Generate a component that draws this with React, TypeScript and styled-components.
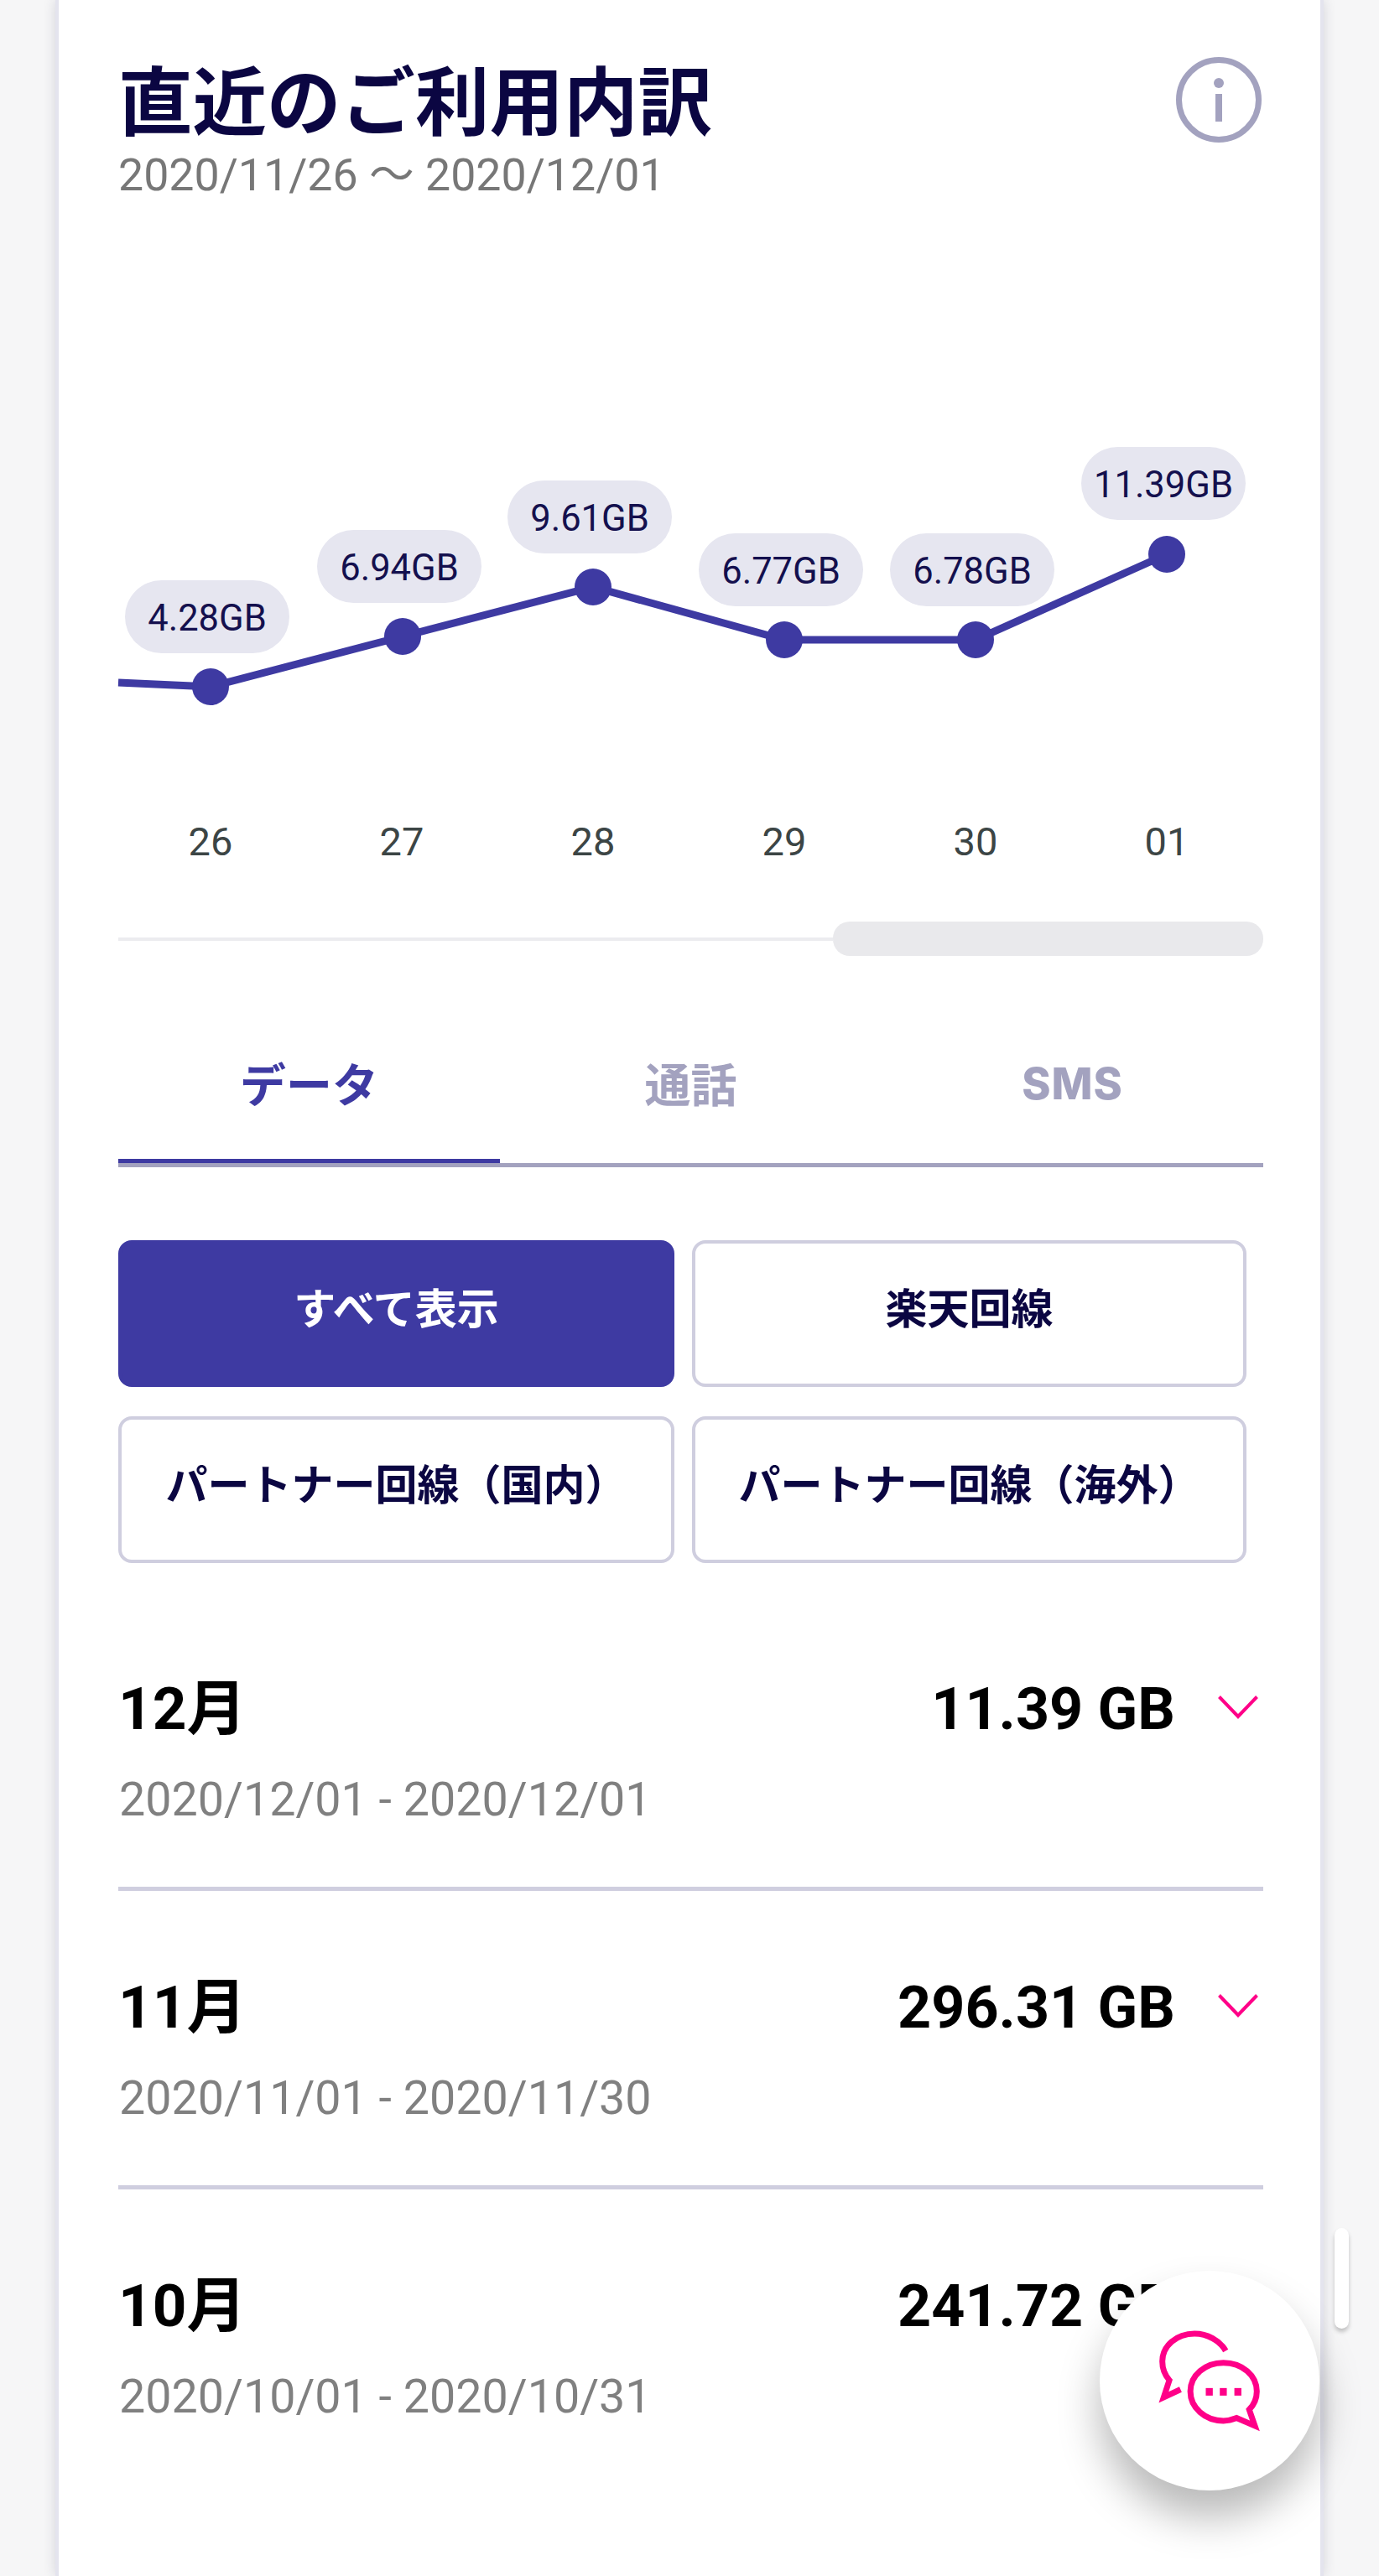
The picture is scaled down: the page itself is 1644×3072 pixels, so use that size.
import styled, { createGlobalStyle } from 'styled-components';

const GlobalStyle = createGlobalStyle`
  html, body {
    margin: 0;
    padding: 0;
    height: 3072px;
    overflow: hidden;
    background: #f6f6f7;
  }
  * {
    box-sizing: border-box;
  }
`;

const CJK = '"Noto Sans CJK JP", sans-serif';
const LATIN = 'Roboto, "Noto Sans CJK JP", sans-serif';

const Page = styled.div`
  position: relative;
  width: 1644px;
  height: 3072px;
  overflow: hidden;
  padding-left: 66px;
`;

const Panel = styled.main`
  width: 1512px;
  height: 3072px;
  background: #fff;
  border-left: 4px solid #e4e4ee;
  border-right: 4px solid #e4e4ee;
  box-shadow: 0 0 14px rgba(40, 40, 70, 0.16);
  padding: 60px 68px 0 71px;
`;

const Header = styled.header`
  display: flex;
  justify-content: space-between;
  align-items: flex-start;
  height: 180px;
`;

const Title = styled.h1`
  margin: 0;
  font-family: ${CJK};
  font-size: 88.5px;
  line-height: 110px;
  font-weight: 700;
  color: #0b0642;
`;

const Period = styled.p`
  margin: 8px 0 0;
  font-family: ${LATIN};
  font-size: 53.7px;
  line-height: 62px;
  font-weight: 400;
  color: #777;
`;

const InfoIcon = styled.svg`
  width: 102px;
  height: 102px;
  margin: 8px 2px 0 0;
  flex: none;
`;

const Chart = styled.div`
  position: relative;
  height: 460px;
  margin: 260px 0 0 0;
`;

const ChartLine = styled.svg`
  position: absolute;
  left: 0;
  top: 0;
  width: 1365px;
  height: 460px;
  overflow: visible;
`;

const Pill = styled.span`
  position: absolute;
  width: 196px;
  height: 87px;
  border-radius: 44px;
  background: #e6e6f0;
  color: #14104e;
  font-family: ${LATIN};
  font-size: 43.5px;
  line-height: 92px;
  text-align: center;
`;

const AxisRow = styled.div`
  display: grid;
  grid-template-columns: repeat(6, 228px);
  margin: 14px 0 0 -4px;
`;

const AxisLabel = styled.span`
  font-family: ${LATIN};
  font-size: 47px;
  line-height: 60px;
  text-align: center;
  color: #3c4545;
`;

const Scroller = styled.div`
  display: flex;
  align-items: center;
  height: 41px;
  margin-top: 65px;
`;

const ScrollTrack = styled.div`
  flex: 1;
  height: 4px;
  background: #ececef;
`;

const ScrollThumb = styled.div`
  width: 513px;
  height: 41px;
  border-radius: 20px;
  background: #e9e9ec;
`;

const Tabs = styled.nav`
  display: grid;
  grid-template-columns: repeat(3, 1fr);
  margin-top: 90px;
  border-bottom: 5px solid #a3a2bf;
`;

const Tab = styled.div<{ $active?: boolean }>`
  height: 157px;
  text-align: center;
  font-family: ${CJK};
  font-size: 55px;
  line-height: 120px;
  font-weight: 700;
  color: ${(p) => (p.$active ? '#3e3aa2' : '#a3a2bf')};
  border-bottom: 5px solid ${(p) => (p.$active ? '#3e3aa2' : 'transparent')};
`;

const TabLatin = styled.span`
  font-family: Inter, sans-serif;
  font-size: 52px;
  font-weight: 800;
  letter-spacing: 1px;
  vertical-align: 3px;
`;

const Filters = styled.div`
  display: grid;
  grid-template-columns: 663px 661px;
  grid-auto-rows: 175px;
  column-gap: 21px;
  row-gap: 35px;
  margin-top: 87px;
`;

const Filter = styled.button<{ $active?: boolean }>`
  padding: 0 0 20px;
  border-radius: 16px;
  border: 4px solid ${(p) => (p.$active ? '#3e3aa2' : '#cfcedf')};
  background: ${(p) => (p.$active ? '#3e3aa2' : '#fff')};
  color: ${(p) => (p.$active ? '#fff' : '#0b0642')};
  font-family: ${CJK};
  font-size: 50px;
  font-weight: 700;
`;

const UsageList = styled.section`
  margin-top: 35px;
`;

const UsageRow = styled.article`
  height: 356px;
  padding-top: 94px;
  border-bottom: 5px solid #cfcedf;

  &:last-child {
    border-bottom: none;
  }
`;

const UsageMain = styled.div`
  display: flex;
  justify-content: space-between;
  align-items: center;
  height: 90px;
`;

const Month = styled.span`
  font-family: ${LATIN};
  font-size: 71px;
  line-height: 90px;
  font-weight: 700;
  color: #000;
`;

const AmountGroup = styled.div`
  display: flex;
  align-items: center;
  gap: 51px;
  padding-right: 6px;
`;

const Amount = styled.span`
  font-family: ${LATIN};
  font-size: 70px;
  line-height: 90px;
  font-weight: 700;
  color: #000;
`;

const Chevron = styled.svg`
  width: 48px;
  height: 28px;
  margin-top: -4px;
`;

const DateRange = styled.p`
  margin: 28px 0 0 1px;
  font-family: ${LATIN};
  font-size: 55.6px;
  line-height: 70px;
  color: #808080;
`;

const ChatButton = styled.button`
  position: absolute;
  left: 1311px;
  top: 2708px;
  width: 262px;
  height: 262px;
  padding: 0;
  border: none;
  border-radius: 50%;
  background: #fff;
  box-shadow: 0 32px 50px rgba(0, 0, 0, 0.28);
  display: flex;
  align-items: center;
  justify-content: center;
`;

const ChatIcon = styled.svg`
  width: 127px;
  height: 127px;
`;

const PageScrollbar = styled.div`
  position: absolute;
  left: 1591px;
  top: 2657px;
  width: 17px;
  height: 120px;
  border-radius: 9px;
  background: #fff;
  box-shadow: 0 4px 5px rgba(0, 0, 0, 0.22);
`;

// x, y are relative to the chart box, which sits at (141, 500)
const points = [
  { day: '26', value: '4.28GB', x: 110, y: 319, pill: 192 },
  { day: '27', value: '6.94GB', x: 339, y: 259, pill: 132 },
  { day: '28', value: '9.61GB', x: 566, y: 200, pill: 73 },
  { day: '29', value: '6.77GB', x: 794, y: 263, pill: 136 },
  { day: '30', value: '6.78GB', x: 1022, y: 263, pill: 136 },
  { day: '01', value: '11.39GB', x: 1250, y: 161, pill: 33 },
];

const linePath = `M0 314 ${points.map((p) => `L${p.x} ${p.y}`).join(' ')}`;

const filters = ['すべて表示', '楽天回線', 'パートナー回線（国内）', 'パートナー回線（海外）'];

const usage = [
  { month: '12月', amount: '11.39 GB', range: '2020/12/01 - 2020/12/01' },
  { month: '11月', amount: '296.31 GB', range: '2020/11/01 - 2020/11/30' },
  { month: '10月', amount: '241.72 GB', range: '2020/10/01 - 2020/10/31' },
];

export default function App() {
  return (
    <Page>
      <GlobalStyle />
      <Panel>
        <Header>
          <div>
            <Title>直近のご利用内訳</Title>
            <Period>2020/11/26 ～ 2020/12/01</Period>
          </div>
          <InfoIcon viewBox="0 0 102 102">
            <circle cx="51" cy="51" r="47.5" fill="none" stroke="#a3a2bf" strokeWidth="7" />
            <circle cx="51" cy="31" r="6" fill="#a3a2bf" />
            <rect x="47" y="44" width="8" height="33" fill="#a3a2bf" />
          </InfoIcon>
        </Header>

        <Chart>
          <ChartLine viewBox="0 0 1365 460">
            <path d={linePath} fill="none" stroke="#3e3aa2" strokeWidth="9" />
            {points.map((p) => (
              <circle key={p.day} cx={p.x} cy={p.y} r="22" fill="#3e3aa2" />
            ))}
          </ChartLine>
          {points.map((p) => (
            <Pill key={p.day} style={{ left: p.x - 102, top: p.pill }}>
              {p.value}
            </Pill>
          ))}
        </Chart>
        <AxisRow>
          {points.map((p) => (
            <AxisLabel key={p.day}>{p.day}</AxisLabel>
          ))}
        </AxisRow>

        <Scroller>
          <ScrollTrack />
          <ScrollThumb />
        </Scroller>

        <Tabs>
          <Tab $active>データ</Tab>
          <Tab>通話</Tab>
          <Tab>
            <TabLatin>SMS</TabLatin>
          </Tab>
        </Tabs>

        <Filters>
          {filters.map((label, i) => (
            <Filter key={label} $active={i === 0}>
              {label}
            </Filter>
          ))}
        </Filters>

        <UsageList>
          {usage.map((row) => (
            <UsageRow key={row.month}>
              <UsageMain>
                <Month>{row.month}</Month>
                <AmountGroup>
                  <Amount>{row.amount}</Amount>
                  <Chevron viewBox="0 0 48 28">
                    <path d="M1.5 1.5 L24 25 L46.5 1.5" fill="none" stroke="#ff0088" strokeWidth="4" />
                  </Chevron>
                </AmountGroup>
              </UsageMain>
              <DateRange>{row.range}</DateRange>
            </UsageRow>
          ))}
        </UsageList>
      </Panel>

      <PageScrollbar />
      <ChatButton aria-label="chat">
        <ChatIcon viewBox="240 530 380 380">
          <path
            d="M486 612 C465 575 420 551 375 551 C310 551 260 595 260 650 C260 680 270 700 285 717 L265 778 L325 750"
            fill="none"
            stroke="#ff0088"
            strokeWidth="21"
          />
          <path
            d="M525 852 C510 858 495 862 478 862 C412 862 360 815 360 757 C360 700 412 655 478 655 C545 655 597 700 597 757 C597 780 587 805 570 822 L590 880 Z"
            fill="none"
            stroke="#ff0088"
            strokeWidth="21"
          />
          <rect x="415" y="745" width="25" height="27" fill="#ff0088" />
          <rect x="465" y="745" width="25" height="27" fill="#ff0088" />
          <rect x="517" y="745" width="25" height="27" fill="#ff0088" />
        </ChatIcon>
      </ChatButton>
    </Page>
  );
}
